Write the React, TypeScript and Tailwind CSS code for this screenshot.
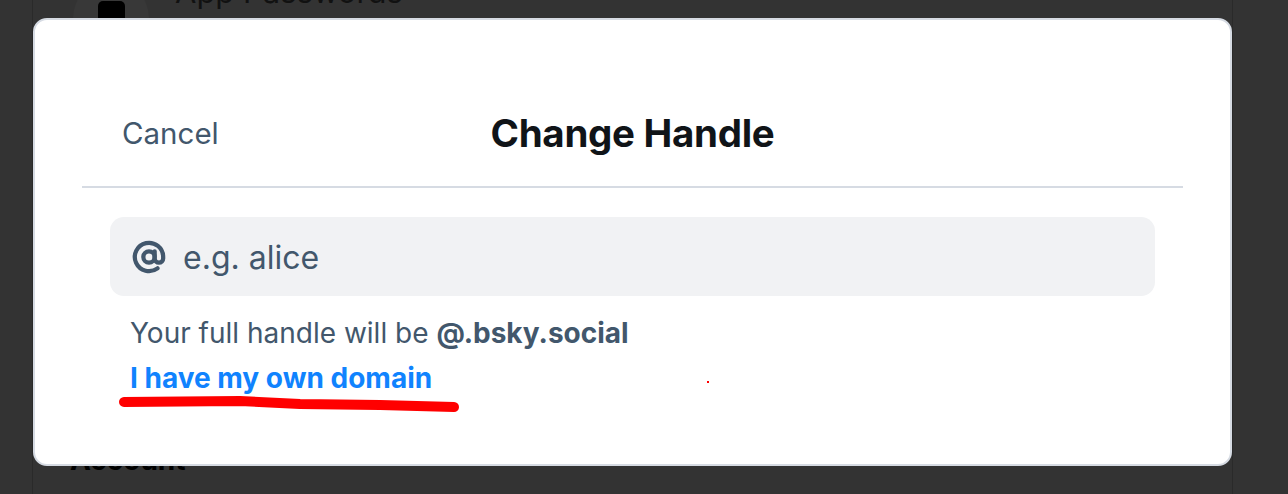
import { AtSign } from 'lucide-react';

const font = { fontFamily: 'Inter, "Noto Sans", sans-serif' };

function Backdrop() {
  return (
    <div className="absolute inset-0 flex bg-[#333333]">
      <div className="w-[33px] shrink-0 border-r border-[#2a2a2a] bg-[#333333]" />
      <div className="flex-1 flex flex-col justify-between">
        <div className="flex items-start gap-[26px] pl-[40px] -mt-[20px]">
          <div className="w-[76px] h-[76px] rounded-full bg-[#383838] flex items-center justify-center">
            <div className="w-[27px] h-[27px] rounded-[5px] bg-black mt-[-8px]" />
          </div>
          <span className="text-[31px] text-[#111111] leading-none mt-[-4px]">App Passwords</span>
        </div>
        <div className="pl-[37px] pb-[18px]">
          <span className="text-[28px] font-bold text-black leading-none">Account</span>
        </div>
      </div>
      <div className="w-[56px] shrink-0 border-l border-[#2a2a2a] bg-[#333333]" />
    </div>
  );
}

function Scribble() {
  return (
    <svg className="absolute left-0 top-0 pointer-events-none" width="1288" height="494">
      <path
        d="M124 402 L 240 401 L 300 404 L 380 405 L 454 407"
        stroke="#ff0000"
        strokeWidth="10"
        strokeLinecap="round"
        strokeLinejoin="round"
        fill="none"
      />
      <rect x="707" y="381" width="2" height="2" fill="#ff0000" />
    </svg>
  );
}

export default function App() {
  return (
    <div className="relative w-[1288px] h-[494px] overflow-hidden" style={font}>
      <Backdrop />
      <div className="absolute left-[33px] top-[18px] w-[1199px] h-[448px] rounded-[14px] border-2 border-[#d6dbe3] bg-white px-[47px]">
        <div className="relative flex items-center h-[168px] pt-[60px] border-b-2 border-[#d6dbe3]">
          <span className="pl-[40px] text-[29.5px] text-[#42576c]">Cancel</span>
          <span className="absolute inset-x-0 bottom-[31px] text-center text-[38.5px] leading-[44px] font-bold text-[#101418] tracking-[-0.3px]">
            Change Handle
          </span>
        </div>
        <div className="px-[28px] pt-[29px]">
          <div className="flex items-center h-[79px] rounded-[14px] bg-[#f1f2f4] pl-[22px] gap-[17px]">
            <AtSign className="w-[34px] h-[34px] text-[#42576c]" strokeWidth={3} />
            <span className="text-[32px] text-[#42576c] pt-[3px]">e.g. alice</span>
          </div>
          <div className="pl-[20px] pt-[18px]">
            <p className="text-[28px] leading-[38px] text-[#42576c]">
              Your full handle will be <span className="font-bold">@.bsky.social</span>
            </p>
            <p className="mt-[7px] text-[28px] leading-[38px] font-bold text-[#1083fe]">
              I have my own domain
            </p>
          </div>
        </div>
      </div>
      <Scribble />
    </div>
  );
}
